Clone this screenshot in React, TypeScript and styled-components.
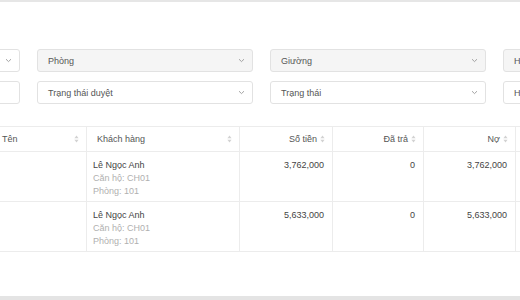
import React from 'react';
import styled, { createGlobalStyle } from 'styled-components';

const GlobalStyle = createGlobalStyle`
  html, body {
    margin: 0;
    padding: 0;
    background: #fff;
    font-family: "Liberation Sans", Arial, sans-serif;
    overflow: hidden;
  }
`;

const Page = styled.div`
  width: 520px;
  height: 300px;
  display: flex;
  flex-direction: column;
  overflow: hidden;
  border-top: 2px solid #e6e6e6;
  box-sizing: border-box;
`;

const Content = styled.div`
  flex: 1;
  padding-top: 47px;
  overflow: hidden;
`;

const BottomBar = styled.div`
  height: 4px;
  background: #e4e4e4;
`;

const FilterGrid = styled.div`
  display: grid;
  grid-template-columns: repeat(4, 216px);
  column-gap: 17px;
  row-gap: 9px;
  margin-left: -196px;
`;

const SelectBox = styled.div<{ $disabled?: boolean }>`
  height: 23px;
  box-sizing: border-box;
  border: 1px solid #e2e2e2;
  border-radius: 3px;
  background: ${p => (p.$disabled ? '#f5f5f5' : '#fff')};
  display: flex;
  align-items: center;
  justify-content: space-between;
  padding: 0 7px 0 10px;
  font-size: 9px;
  color: #555;
  white-space: nowrap;
  overflow: hidden;
`;

const Chevron = () => (
  <svg width="7" height="5" viewBox="0 0 7 5">
    <path d="M1 1.2 L3.5 3.6 L6 1.2" fill="none" stroke="#999" strokeWidth="0.9" />
  </svg>
);

const SortIcon = () => (
  <svg width="5" height="8" viewBox="0 0 5 8">
    <path d="M2.5 0.6 L4.6 3.2 H0.4 Z" fill="#d2d2d2" />
    <path d="M2.5 7.4 L4.6 4.8 H0.4 Z" fill="#d2d2d2" />
  </svg>
);

const Table = styled.div`
  margin-top: 22px;
  margin-left: -8px;
  display: grid;
  grid-template-columns: 95px 153px 93px 91px 92px 60px;
  border-top: 1px solid #ececec;
`;

const HeadCell = styled.div<{ $right?: boolean }>`
  height: 25px;
  box-sizing: border-box;
  border-bottom: 1px solid #ececec;
  border-right: 1px solid #ececec;
  display: flex;
  align-items: center;
  justify-content: ${p => (p.$right ? 'flex-end' : 'space-between')};
  gap: 3px;
  padding: 0 7px 0 10px;
  font-size: 9px;
  color: #555;
  white-space: nowrap;
`;

const Cell = styled.div<{ $right?: boolean }>`
  height: 50px;
  box-sizing: border-box;
  border-bottom: 1px solid #ececec;
  border-right: 1px solid #ececec;
  padding: 7px 8px 0 6px;
  font-size: 9px;
  line-height: 13px;
  color: #444;
  text-align: ${p => (p.$right ? 'right' : 'left')};
  white-space: nowrap;
`;

const SubLine = styled.div`
  color: #b0b0b0;
`;

const filters = [
  { label: 'Căn hộ', disabled: false },
  { label: 'Phòng', disabled: true },
  { label: 'Giường', disabled: true },
  { label: 'Hợp đồng', disabled: true },
  { label: 'Tháng', disabled: false },
  { label: 'Trạng thái duyệt', disabled: false },
  { label: 'Trạng thái', disabled: false },
  { label: 'Hạn thanh toán', disabled: false },
];

const rows = [
  { name: 'Lê Ngọc Anh', apt: 'CH01', room: '101', amount: '3,762,000', paid: '0', debt: '3,762,000' },
  { name: 'Lê Ngọc Anh', apt: 'CH01', room: '101', amount: '5,633,000', paid: '0', debt: '5,633,000' },
];

const App: React.FC = () => {
  return (
    <>
      <GlobalStyle />
      <Page>
        <Content>
          <FilterGrid>
            {filters.map((f, i) => (
              <SelectBox key={i} $disabled={f.disabled}>
                <span>{f.label}</span>
                {i !== 4 && <Chevron />}
              </SelectBox>
            ))}
          </FilterGrid>
          <Table>
            <HeadCell>
              <span>Tên</span>
              <SortIcon />
            </HeadCell>
            <HeadCell>
              <span>Khách hàng</span>
              <SortIcon />
            </HeadCell>
            <HeadCell $right>
              <span>Số tiền</span>
              <SortIcon />
            </HeadCell>
            <HeadCell $right>
              <span>Đã trả</span>
              <SortIcon />
            </HeadCell>
            <HeadCell $right>
              <span>Nợ</span>
              <SortIcon />
            </HeadCell>
            <HeadCell />
            {rows.map((r, i) => (
              <React.Fragment key={i}>
                <Cell />
                <Cell>
                  <div>{r.name}</div>
                  <SubLine>Căn hộ: {r.apt}</SubLine>
                  <SubLine>Phòng: {r.room}</SubLine>
                </Cell>
                <Cell $right>{r.amount}</Cell>
                <Cell $right>{r.paid}</Cell>
                <Cell $right>{r.debt}</Cell>
                <Cell />
              </React.Fragment>
            ))}
          </Table>
        </Content>
        <BottomBar />
      </Page>
    </>
  );
};

export default App;
